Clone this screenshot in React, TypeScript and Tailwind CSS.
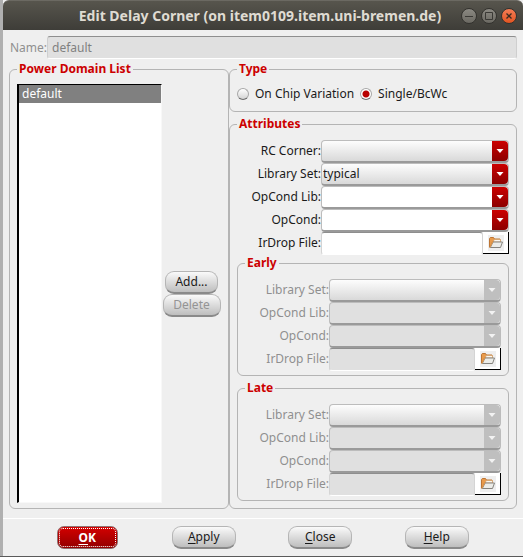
import { useId, type ReactNode } from "react";

function Group({ title, className = "", children }: { title: string; className?: string; children: ReactNode }) {
  return (
    <fieldset className={`min-w-0 rounded-md border border-[#b4b4b4] px-[7px] ${className}`}>
      <legend className="px-0.5 text-[12px] leading-4 font-bold text-[#cc0000]">{title}</legend>
      {children}
    </fieldset>
  );
}

function FolderIcon() {
  return (
    <svg width="16" height="16" viewBox="0 0 16 16" aria-hidden="true">
      <rect width="16" height="16" fill="#efefef" />
      <path d="M1.5 12V3.5l.8-1h3.2l1 1.5H12v3L4.5 7 2 12.5z" fill="#e99b4c" stroke="#bd7636" />
      <path d="M6 4.5h6.5V7h-7z" fill="#fbf7f0" stroke="#d3a067" strokeWidth=".8" />
      <path d="M2.3 12.5 5 7h9.5l-2 5.500z" fill="#ecece8" stroke="#85837e" />
      <path d="M2 12.3 4.8 6.7" stroke="#e0994e" fill="none" />
    </svg>
  );
}

type Kind = "list" | "edit";

function Combo({ label, kind, value = "", disabled = false }: { label: string; kind: Kind; value?: string; disabled?: boolean }) {
  const id = useId();
  const face =
    kind === "list" ? "bg-linear-to-b from-[#fdfdfd] to-[#d9d9d9]" : disabled ? "bg-[#e0e0e0]" : "bg-white";
  const arrow = disabled ? "bg-[#bfbfbf]" : "bg-linear-to-b from-[#cc0000] to-[#8c0000]";
  return (
    <>
      <label htmlFor={id} className={`text-right leading-[22px] ${disabled ? "text-[#8f8f8f]" : ""}`}>
        {label}
      </label>
      <div className="grid h-[23px] min-w-0">
        <select
          id={id}
          defaultValue={value}
          disabled={disabled}
          className={`col-start-1 row-start-1 w-full appearance-none rounded-[4px] border border-b-2 border-[#bcbcbc] border-b-[#9a9a9a] pl-px leading-[18px] text-[#1a1a1a] opacity-100 outline-none ${face}`}
        >
          <option value={value}>{value}</option>
        </select>
        <span
          className={`pointer-events-none col-start-1 row-start-1 mt-px mb-0.5 mr-px flex w-4 items-center justify-center justify-self-end rounded-r-[4px] ${arrow}`}
        >
          <svg width="8" height="5" viewBox="0 0 8 5" aria-hidden="true">
            <path d="M.5 0h7L4 4z" fill={disabled ? "#f2f2f2" : "#ffffff"} />
          </svg>
        </span>
      </div>
    </>
  );
}

function FileField({ disabled = false }: { disabled?: boolean }) {
  const id = useId();
  return (
    <>
      <label htmlFor={id} className={`text-right leading-[22px] ${disabled ? "text-[#8f8f8f]" : ""}`}>
        IrDrop File:
      </label>
      <div className="flex h-[23px] min-w-0 items-start">
        <input
          id={id}
          type="text"
          disabled={disabled}
          className={`h-full min-w-0 flex-1 rounded-[3px] border border-[#d4d4d4] border-t-[#8e8e8e] border-b-white px-1 outline-none ${disabled ? "bg-[#e0e0e0]" : "bg-white"}`}
        />
        <button
          type="button"
          aria-label="Browse"
          className="flex h-[22px] w-[26px] items-center justify-center border-r border-b border-black bg-white"
        >
          <FolderIcon />
        </button>
      </div>
    </>
  );
}

function PushButton({ children, className = "w-16", disabled = false }: { children: ReactNode; className?: string; disabled?: boolean }) {
  return (
    <button
      type="button"
      disabled={disabled}
      className={`h-[23px] rounded-[9px] border border-b-2 border-[#b5b5b5] border-b-[#8a8a8a] bg-linear-to-b from-[#fafafa] to-[#bebebe] leading-[18px] disabled:text-[#949494] ${className}`}
    >
      {children}
    </button>
  );
}

function Key({ children }: { children: ReactNode }) {
  return <span className="underline underline-offset-2">{children}</span>;
}

function CornerGroup({ title }: { title: string }) {
  return (
    <Group title={title} className="pb-1">
      <div className="grid grid-cols-[84px_1fr] pt-2">
        <Combo label="Library Set:" kind="list" disabled />
        <Combo label="OpCond Lib:" kind="edit" disabled />
        <Combo label="OpCond:" kind="edit" disabled />
        <FileField disabled />
      </div>
    </Group>
  );
}

function Radio({ label, checked = false }: { label: string; checked?: boolean }) {
  return (
    <label className="flex items-center gap-1.5">
      <input
        type="radio"
        name="type"
        defaultChecked={checked}
        className="size-3 appearance-none rounded-full border border-[#a8a8a8] border-b-[#6e6e6e] bg-linear-to-b from-white to-[#d4d4d4] checked:bg-[radial-gradient(circle,#b80000_0_3px,#ffffff_4px)]"
      />
      {label}
    </label>
  );
}

const windowButton = "flex size-4 items-center justify-center rounded-full border border-[#33322e]";

export default function App() {
  return (
    <div className="border-b border-[#5a5a5a] bg-[#b0b0b0] pl-[3px] font-['Noto_Sans','Open_Sans',sans-serif] text-[12px] text-[#1a1a1a]">
      <div className="bg-[#efefef]">
        <header className="grid h-[30px] grid-cols-[1fr_auto_1fr] items-center rounded-t-md border-t border-[#6b6962] bg-linear-to-b from-[#57554d] to-[#3e3d38] pr-1.5">
          <h1 className="col-start-2 text-[14px] font-bold whitespace-nowrap text-[#dfdbd2]">
            Edit Delay Corner (on item0109.item.uni-bremen.de)
          </h1>
          <div className="flex justify-end gap-1">
            <button type="button" aria-label="Minimize" className={`${windowButton} bg-linear-to-b from-[#8b8982] to-[#6b6962]`}>
              <svg width="8" height="8" viewBox="0 0 8 8"><path d="M0 4.5h8" stroke="#3a3935" /></svg>
            </button>
            <button type="button" aria-label="Maximize" className={`${windowButton} bg-linear-to-b from-[#8b8982] to-[#6b6962]`}>
              <svg width="8" height="8" viewBox="0 0 8 8"><path d="M.5.5h7v7h-7z" fill="none" stroke="#3a3935" /></svg>
            </button>
            <button type="button" aria-label="Close window" className={`${windowButton} bg-linear-to-b from-[#f37c54] to-[#e2541f]`}>
              <svg width="6" height="6" viewBox="0 0 6 6"><path d="M.5.5l5 5m0-5l-5 5" stroke="#3a2a20" strokeWidth="1.3" /></svg>
            </button>
          </div>
        </header>

        <main className="px-1.5 pt-1.5 pb-[9px]">
          <div className="flex items-center">
            <label htmlFor="corner-name" className="pl-px text-[#8f8f8f]">Name:</label>
            <input
              id="corner-name"
              type="text"
              disabled
              defaultValue="default"
              className="h-[23px] min-w-0 flex-1 rounded-[3px] border border-[#cfcfcf] border-t-[#8e8e8e] border-b-white bg-[#e0e0e0] px-1 text-[#808080]"
            />
          </div>

          <div className="flex pt-0.5">
            <Group title="Power Domain List" className="flex w-[220px] shrink-0 flex-col pb-[5px]">
              <div className="flex h-full pt-[7px]">
                <ul className="min-w-0 flex-1 border-t border-r border-b border-l-2 border-t-black border-r-[#f8f8f8] border-b-[#f8f8f8] border-l-black bg-white">
                  <li className="bg-[#808080] pl-[3px] leading-[18px] text-white">default</li>
                </ul>
                <div className="flex w-[59px] flex-col items-center justify-center">
                  <PushButton className="w-[53px]">Add...</PushButton>
                  <PushButton className="w-[58px]" disabled>Delete</PushButton>
                </div>
              </div>
            </Group>

            <div className="flex min-w-0 flex-1 flex-col gap-1">
              <Group title="Type" className="pb-2">
                <div className="flex gap-1.5 pt-2">
                  <Radio label="On Chip Variation" />
                  <Radio label="Single/BcWc" checked />
                </div>
              </Group>
              <Group title="Attributes" className="pb-[7px]">
                <div className="grid grid-cols-[84px_1fr] pt-2">
                  <Combo label="RC Corner:" kind="list" />
                  <Combo label="Library Set:" kind="list" value="typical" />
                  <Combo label="OpCond Lib:" kind="edit" />
                  <Combo label="OpCond:" kind="edit" />
                  <FileField />
                </div>
                <div className="flex flex-col gap-1">
                  <CornerGroup title="Early" />
                  <CornerGroup title="Late" />
                </div>
              </Group>
            </div>
          </div>
        </main>

        <footer className="grid grid-cols-4 justify-items-center border-t border-white pt-[7px] pr-7 pb-[7px] pl-[26px]">
          <button
            type="button"
            className="h-[23px] w-[61px] rounded-[7px] border border-[#8f7070] bg-linear-to-b from-[#d40000] to-[#930000] p-px font-bold text-white"
          >
            <span className="flex h-full items-center justify-center rounded-[4px] border border-dotted border-white">
              <span><Key>O</Key>K</span>
            </span>
          </button>
          <PushButton><Key>A</Key>pply</PushButton>
          <PushButton><Key>C</Key>lose</PushButton>
          <PushButton><Key>H</Key>elp</PushButton>
        </footer>
      </div>
    </div>
  );
}
